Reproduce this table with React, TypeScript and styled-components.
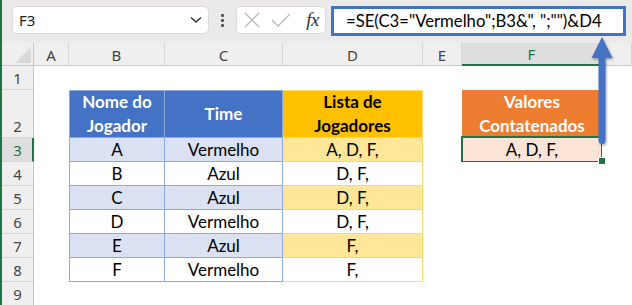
import React from "react";
import styled, { createGlobalStyle, css } from "styled-components";

const GlobalStyle = createGlobalStyle`
  html, body { margin: 0; padding: 0; background: #ffffff; overflow: hidden; }
  * { box-sizing: border-box; }
`;

const CELL_FONT = `"Lato", "Liberation Sans", sans-serif`;
const UI_FONT = `"Noto Sans", "Open Sans", sans-serif`;
const GREEN = "#217346";

const Window = styled.div`
  position: relative;
  width: 632px;
  height: 305px;
  border-left: 2px solid ${GREEN};
  overflow: hidden;
  background: #ffffff;
`;

/* ---------- formula bar ---------- */

const FormulaBar = styled.div`
  height: 43px;
  background: #ebe9e9;
  display: flex;
  align-items: flex-start;
  padding: 6px 0 0 10px;
`;

const NameBox = styled.div`
  width: 197px;
  height: 28px;
  background: #ffffff;
  border: 1px solid #dcdada;
  border-radius: 5px;
  display: flex;
  align-items: center;
  justify-content: space-between;
  padding: 0 6px 0 6px;
  font-family: ${UI_FONT};
  font-size: 15px;
  color: #222;
`;

const Dots = styled.div`
  width: 27px;
  height: 28px;
  display: flex;
  flex-direction: column;
  align-items: center;
  justify-content: center;
  gap: 2px;
  span {
    width: 3px;
    height: 3px;
    background: #555;
    border-radius: 1px;
  }
`;

const FxBox = styled.div`
  width: 90px;
  height: 28px;
  background: #ffffff;
  border: 1px solid #dcdada;
  border-radius: 5px;
  display: flex;
  align-items: center;
  gap: 11px;
  padding: 0 6px 0 7px;
`;

const FxLabel = styled.span`
  font-family: "Liberation Serif", "DejaVu Serif", serif;
  font-style: italic;
  font-size: 19px;
  color: #333;
  margin-left: auto;
  letter-spacing: -0.5px;
`;

const FormulaInput = styled.div`
  margin-left: 5px;
  width: 295px;
  height: 30px;
  background: #ffffff;
  border: 3px solid #4472c4;
  display: flex;
  align-items: center;
  padding-left: 12px;
  font-family: ${CELL_FONT};
  font-size: 16.7px;
  color: #000;
  white-space: pre;
`;

/* ---------- sheet grid ---------- */

const Sheet = styled.div`
  display: grid;
  grid-template-columns: 32px 35px 96px 118px 140px 39px 140px 1fr;
  grid-template-rows: 23px 24px 48px repeat(7, 24px);
`;

const Corner = styled.div`
  background: #f0efef;
  border-right: 1px solid #c8c8c8;
  border-bottom: 1px solid #c8c8c8;
  position: relative;
  svg { position: absolute; right: 2px; bottom: 2px; }
`;

const ColHead = styled.div<{ $active?: boolean }>`
  background: ${(p) => (p.$active ? "#dedede" : "#f0efef")};
  color: ${(p) => (p.$active ? GREEN : "#444")};
  border-right: 1px solid #d6d6d6;
  border-bottom: ${(p) => (p.$active ? `2px solid ${GREEN}` : "1px solid #c8c8c8")};
  font-family: ${UI_FONT};
  font-size: 15px;
  display: flex;
  align-items: center;
  justify-content: center;
  padding-top: 1px;
`;

const RowHead = styled.div<{ $active?: boolean; $tall?: boolean }>`
  background: ${(p) => (p.$active ? "#dedede" : "#f0efef")};
  color: ${(p) => (p.$active ? GREEN : "#444")};
  border-right: ${(p) => (p.$active ? `2px solid ${GREEN}` : "1px solid #c8c8c8")};
  border-bottom: 1px solid #d6d6d6;
  font-family: ${UI_FONT};
  font-size: 15px;
  display: flex;
  align-items: ${(p) => (p.$tall ? "flex-end" : "center")};
  justify-content: center;
  padding-bottom: ${(p) => (p.$tall ? "1px" : "0")};
  padding-left: ${(p) => (p.$active ? "1px" : "0")};
`;

type Tone = "none" | "blueHead" | "goldHead" | "orangeHead" | "blueBand" | "goldBand" | "peach" | "white";

const fills: Record<Tone, string> = {
  none: "#ffffff",
  white: "#ffffff",
  blueHead: "#4472c4",
  goldHead: "#ffc000",
  orangeHead: "#ed7d31",
  blueBand: "#d9e1f2",
  goldBand: "#ffe699",
  peach: "#fce4d6",
};

const Cell = styled.div<{
  $tone?: Tone;
  $line?: string;
  $left?: boolean;
  $top?: boolean;
  $head?: boolean;
  $dark?: boolean;
  $selected?: boolean;
}>`
  position: relative;
  background: ${(p) => fills[p.$tone ?? "none"]};
  display: flex;
  align-items: center;
  justify-content: center;
  text-align: center;
  font-family: ${CELL_FONT};
  font-size: 17px;
  line-height: 24px;
  color: #000;
  ${(p) =>
    p.$line &&
    css`
      border-right: 1px solid ${p.$line};
      border-bottom: 1px solid ${p.$line};
      ${p.$left && `border-left: 1px solid ${p.$line};`}
      ${p.$top && `border-top: 1px solid ${p.$line};`}
    `}
  ${(p) =>
    p.$head &&
    css`
      font-weight: 700;
      color: ${p.$dark ? "#000" : "#ffffff"};
    `}
  ${(p) =>
    p.$selected &&
    css`
      &::after {
        content: "";
        position: absolute;
        left: -1px;
        top: -2px;
        right: -1px;
        bottom: -1px;
        border: 2px solid ${GREEN};
      }
      &::before {
        content: "";
        position: absolute;
        right: -4px;
        bottom: -3px;
        width: 6px;
        height: 6px;
        background: ${GREEN};
        border: 1px solid #ffffff;
        z-index: 1;
      }
    `}
`;

const Arrow = styled.svg`
  position: absolute;
  left: 586px;
  top: 36px;
  pointer-events: none;
`;

const BLUE_LINE = "#8eaadb";
const GOLD_LINE = "#ffd966";

const players = [
  { name: "A", team: "Vermelho", list: "A, D, F," },
  { name: "B", team: "Azul", list: "D, F," },
  { name: "C", team: "Azul", list: "D, F," },
  { name: "D", team: "Vermelho", list: "D, F," },
  { name: "E", team: "Azul", list: "F," },
  { name: "F", team: "Vermelho", list: "F," },
];

const Chevron = () => (
  <svg width="12" height="8" viewBox="0 0 12 8">
    <polyline points="1,1.5 6,6 11,1.5" fill="none" stroke="#333" strokeWidth="1.4" />
  </svg>
);

const Cross = () => (
  <svg width="16" height="16" viewBox="0 0 16 16">
    <path d="M1 1 L15 15 M15 1 L1 15" stroke="#b9b9b9" strokeWidth="1.3" fill="none" />
  </svg>
);

const Check = () => (
  <svg width="20" height="16" viewBox="0 0 20 16">
    <polyline points="1,8 7,14 19,2" stroke="#b9b9b9" strokeWidth="1.3" fill="none" />
  </svg>
);

export default function App() {
  const letters = ["A", "B", "C", "D", "E", "F", "G"];
  return (
    <>
      <GlobalStyle />
      <Window>
        <FormulaBar>
          <NameBox>
            <span>F3</span>
            <Chevron />
          </NameBox>
          <Dots>
            <span />
            <span />
            <span />
          </Dots>
          <FxBox>
            <Cross />
            <Check />
            <FxLabel>fx</FxLabel>
          </FxBox>
          <FormulaInput>{'=SE(C3="Vermelho";B3&", ";"")&D4'}</FormulaInput>
        </FormulaBar>

        <Sheet>
          <Corner>
            <svg width="16" height="16" viewBox="0 0 16 16">
              <polygon points="16,0 16,16 0,16" fill="#d8d8d8" />
            </svg>
          </Corner>
          {letters.map((l) => (
            <ColHead key={l} $active={l === "F"}>
              {l === "G" ? "" : l}
            </ColHead>
          ))}

          {/* row 1 */}
          <RowHead>1</RowHead>
          {letters.map((l) => (
            <Cell key={`r1${l}`} />
          ))}

          {/* row 2: headers */}
          <RowHead $tall>2</RowHead>
          <Cell />
          <Cell $tone="blueHead" $line={BLUE_LINE} $left $top $head>
            Nome do
            <br />
            Jogador
          </Cell>
          <Cell $tone="blueHead" $line={BLUE_LINE} $top $head>
            Time
          </Cell>
          <Cell $tone="goldHead" $line={GOLD_LINE} $top $head $dark>
            Lista de
            <br />
            Jogadores
          </Cell>
          <Cell />
          <Cell $tone="orangeHead" $head>
            Valores
            <br />
            Contatenados
          </Cell>
          <Cell />

          {players.map((p, i) => {
            const band = i % 2 === 0;
            const row = i + 3;
            return (
              <React.Fragment key={p.name}>
                <RowHead $active={row === 3}>{row}</RowHead>
                <Cell />
                <Cell $tone={band ? "blueBand" : "white"} $line={BLUE_LINE} $left>
                  {p.name}
                </Cell>
                <Cell $tone={band ? "blueBand" : "white"} $line={BLUE_LINE}>
                  {p.team}
                </Cell>
                <Cell $tone={band ? "goldBand" : "white"} $line={GOLD_LINE}>
                  {p.list}
                </Cell>
                <Cell />
                {row === 3 ? (
                  <Cell $tone="peach" $selected>
                    A, D, F,
                  </Cell>
                ) : (
                  <Cell />
                )}
                <Cell />
              </React.Fragment>
            );
          })}

          <RowHead>9</RowHead>
          {letters.map((l) => (
            <Cell key={`r9${l}`} />
          ))}
        </Sheet>

        {/* callout arrow pointing at the formula */}
        <Arrow width="32" height="112" viewBox="0 0 32 112">
          <defs>
            <filter id="arrowShadow" x="-50%" y="-10%" width="200%" height="130%">
              <feDropShadow dx="1" dy="1.5" stdDeviation="1.2" floodColor="#000" floodOpacity="0.35" />
            </filter>
          </defs>
          <g filter="url(#arrowShadow)">
            <rect x="10.5" y="18" width="7" height="90" rx="3.5" fill="#4472c4" />
            <polygon points="14,1 3.5,22 24.5,22" fill="#4472c4" />
          </g>
        </Arrow>
      </Window>
    </>
  );
}
